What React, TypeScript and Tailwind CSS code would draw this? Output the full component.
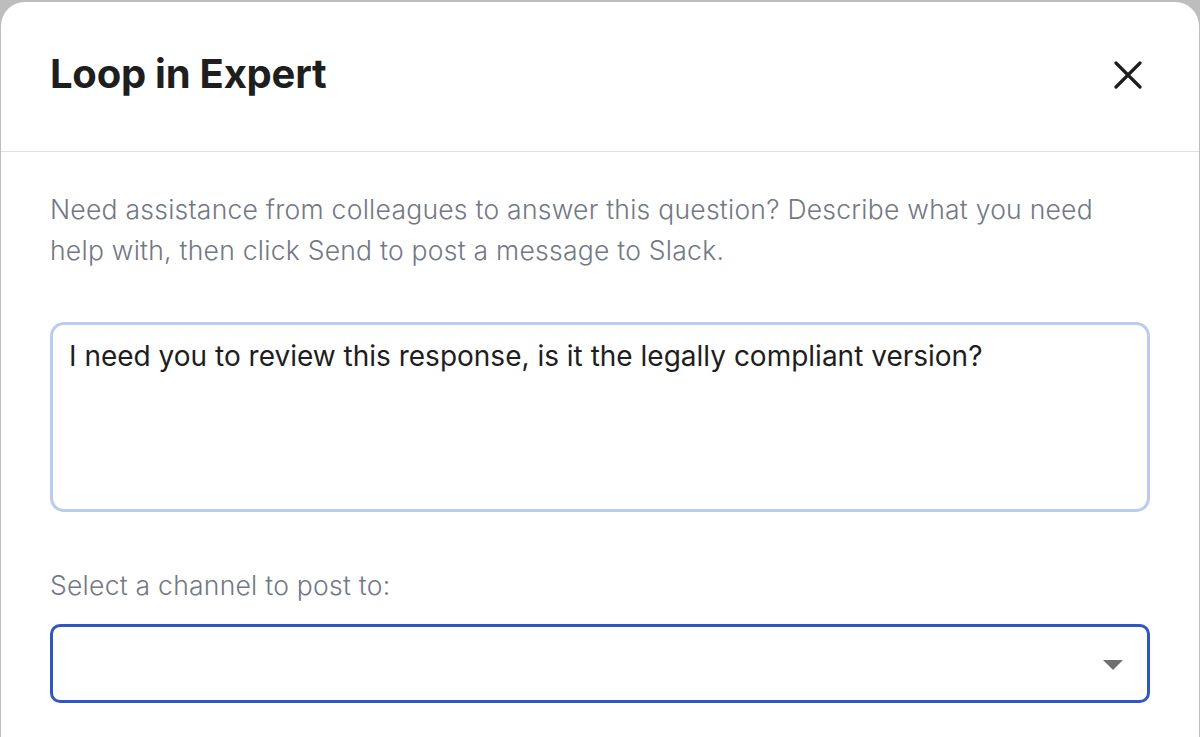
import { useState } from 'react';

// Close glyph drawn as two crossing strokes
function CloseIcon() {
    return (
        <svg width="28" height="28" viewBox="0 0 28 28" fill="none">
            <path d="M2 2L26 26M26 2L2 26" stroke="#1e1e1e" strokeWidth="3.2" strokeLinecap="round" />
        </svg>
    );
}

export default function App() {
    const [message, setMessage] = useState(
        'I need you to review this response, is it the legally compliant version?'
    );
    const [channel, setChannel] = useState('');

    return (
        <div
            className="min-h-[737px] bg-[#bdbdbd] pt-[2px] px-px overflow-hidden"
            style={{ fontFamily: 'Inter, "Noto Sans", sans-serif' }}
        >
            <div className="bg-white rounded-t-[24px] min-h-[735px]">
                {/* Header */}
                <div className="h-[150px] px-[49px] pb-[6px] flex items-center justify-between border-b border-[#e2e2e2]">
                    <h2 className="text-[40px] font-bold text-[#1e1e1e] tracking-[-0.25px]">Loop in Expert</h2>
                    <button className="mr-[8px] mt-[2px] text-[#1e1e1e]">
                        <CloseIcon />
                    </button>
                </div>

                {/* Body */}
                <div className="px-[49px] pt-[37px]">
                    <p className="text-[26.5px] font-light tracking-[0.25px] leading-[41px] text-[#737884]">
                        Need assistance from colleagues to answer this question? Describe what you need help with, then click Send to post a message to Slack.
                    </p>

                    <textarea
                        value={message}
                        onChange={(e) => setMessage(e.target.value)}
                        className="mt-[51px] block w-full h-[190px] resize-none rounded-[14px] border-[3px] border-[#bccbf0] px-[16px] py-[12px] text-[28px] leading-[38px] text-[#1e1e1e] outline-none"
                    />

                    <label className="block mt-[53px] text-[26.5px] font-light tracking-[0.25px] leading-[41px] text-[#737884]">
                        Select a channel to post to:
                    </label>

                    <div className="relative mt-[18px]">
                        <select
                            value={channel}
                            onChange={(e) => setChannel(e.target.value)}
                            className="block w-full h-[79px] appearance-none rounded-[10px] border-[3px] border-[#2f56c6] bg-white px-[16px] text-[26px] text-[#1e1e1e] outline-none"
                        >
                            <option value="" />
                            <option value="general">#general</option>
                            <option value="legal">#legal</option>
                        </select>
                        <span className="pointer-events-none absolute right-[27px] top-[36px] w-0 h-0 border-l-[10px] border-r-[10px] border-t-[10px] border-l-transparent border-r-transparent border-t-[#6f6f6f]" />
                    </div>
                </div>
            </div>
        </div>
    );
}
